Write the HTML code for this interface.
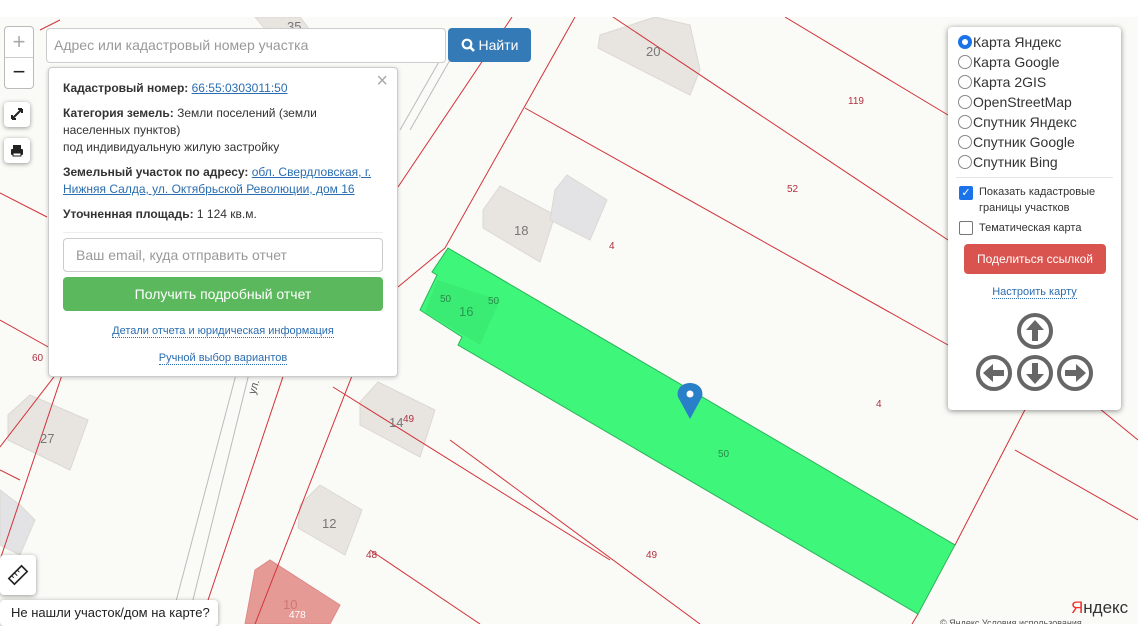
<!DOCTYPE html>
<html><head><meta charset="utf-8"><style>
*{box-sizing:border-box}
body{margin:0;width:1138px;height:624px;overflow:hidden;background:#fff;font-family:"Liberation Sans",Arial,sans-serif;position:relative}
#map{position:absolute;left:0;top:17px;width:1138px;height:607px;background:#fafaf6}
.box{position:absolute;background:#fff;border-radius:4px;box-shadow:0 1px 5px rgba(0,0,0,.4)}
a{color:#2a6db0}
.pop{position:absolute;left:48px;top:67px;width:350px;height:310px;background:#fff;border:1px solid #ccc;border-radius:4px;box-shadow:0 1px 4px rgba(0,0,0,.2);font-size:12px;color:#333;padding:12px 14px}
.pop p{margin:0 0 8px;line-height:17px}
.dot{color:#2a6db0;text-decoration:none;border-bottom:1px dotted #2a6db0;font-size:11px}
.rp{position:absolute;left:948px;top:27px;width:173px;height:383px;background:#fff;border-radius:4px;box-shadow:0 1px 6px rgba(0,0,0,.45);font-size:14px;color:#333;padding:5px 0 0 10px}
.r{height:20px;display:flex;align-items:center}
.r i{width:14px;height:14px;border-radius:50%;border:1.5px solid #888;margin-right:1px;display:inline-block}
</style></head><body>
<div id="map">
<svg width="1138" height="607" viewBox="0 17 1138 607" style="position:absolute;left:0;top:0">
<g fill="#e8e5e1" stroke="#dcd8d3">
<polygon points="600,35 655,17 690,25 700,70 690,95 598,48"/>
<polygon points="483,210 500,186 555,215 540,262 483,228"/>
<polygon points="555,190 567,175 607,200 590,240 550,220" fill="#e3e3e5"/>
<polygon points="360,402 378,382 435,410 420,457 360,425"/>
<polygon points="8,415 30,395 88,420 70,470 8,440"/>
<polygon points="300,505 320,485 362,510 345,555 298,528"/>
<polygon points="0,490 20,505 35,520 20,555 0,545" fill="#e3e3e5"/>
<polygon points="255,570 270,560 340,605 330,624 245,624" fill="#e69a96" stroke="#d88"/>
<polygon points="255,17 300,17 310,30 270,35"/>
</g>
<polygon points="448,248 955,545 918,614 458,345 462,337 420,310 437,275 432,272" fill="#3ef77a" stroke="#2bb35a" stroke-width="1"/>
<polygon points="437,280 500,300 480,345 425,312" fill="#3be46f" opacity=".6"/>
<g stroke="#bbb" stroke-width="1" fill="none">
<line x1="263" y1="317" x2="187" y2="624"/><line x1="247" y1="333" x2="170" y2="624"/>
<line x1="400" y1="130" x2="440" y2="60"/><line x1="410" y1="130" x2="450" y2="60"/>
</g>
<g stroke="#d2323a" stroke-width="1" fill="none">
<line x1="398" y1="187" x2="512" y2="17"/>
<line x1="445" y1="248" x2="575" y2="17"/>
<line x1="398" y1="287" x2="445" y2="248"/>
<line x1="525" y1="108" x2="948" y2="345"/>
<line x1="613" y1="17" x2="948" y2="240"/>
<line x1="785" y1="17" x2="948" y2="115"/>
<line x1="303" y1="317" x2="200" y2="624"/>
<line x1="375" y1="317" x2="255" y2="624"/>
<line x1="333" y1="387" x2="610" y2="560"/>
<line x1="450" y1="440" x2="700" y2="624"/>
<line x1="370" y1="550" x2="480" y2="624"/>
<line x1="100" y1="317" x2="0" y2="447"/>
<line x1="0" y1="193" x2="47" y2="217"/>
<line x1="0" y1="320" x2="68" y2="358"/>
<line x1="68" y1="357" x2="0" y2="560"/>
<line x1="0" y1="470" x2="20" y2="480"/>
<line x1="60" y1="20" x2="40" y2="30"/>
<line x1="955" y1="545" x2="1030" y2="400"/>
<line x1="1030" y1="400" x2="1060" y2="300"/>
<line x1="1015" y1="450" x2="1138" y2="520"/>
<line x1="1040" y1="360" x2="1138" y2="440"/>
<line x1="918" y1="614" x2="912" y2="624"/>
</g>
<g font-size="10" fill="#b03040" font-family="Liberation Sans">
<text x="848" y="104">119</text><text x="787" y="192">52</text><text x="609" y="249">4</text><text x="876" y="407">4</text>
<text x="32" y="361">60</text><text x="403" y="422">49</text><text x="366" y="558">48</text><text x="646" y="558">49</text>
<text x="718" y="457" fill="#2a8a4a">50</text><text x="440" y="302" fill="#2a8a4a">50</text><text x="488" y="304" fill="#2a8a4a">50</text>
<text x="289" y="618" fill="#fff">478</text>
</g>
<g font-size="13" fill="#777" font-family="Liberation Sans">
<text x="646" y="56">20</text><text x="514" y="235">18</text><text x="389" y="427">14</text><text x="40" y="443">27</text><text x="322" y="528">12</text><text x="459" y="316" fill="#2a9a50">16</text><text x="283" y="609" fill="#c77">10</text><text x="287" y="31">35</text>
</g>
<text x="0" y="0" font-size="11" fill="#555" transform="translate(255,395) rotate(-72)">ул.</text>
<path d="M690 383c-9 0-14 7-12 14l12 22 12-22c2-7-3-14-12-14z" fill="#2a7fc9"/>
<circle cx="690" cy="394" r="3.5" fill="#fff"/>
<text x="1071" y="613" font-size="17" fill="#e33" font-family="Liberation Sans">Я<tspan fill="#333">ндекс</tspan></text>
<text x="940" y="626" font-size="9" fill="#555">© Яндекс Условия использования</text>
</svg>
</div>

<div class="box" style="left:4px;top:26px;width:30px;height:63px;border:1px solid #bbb;box-shadow:none">
<div style="height:31px;border-bottom:1px solid #ccc;text-align:center;font-size:22px;color:#aaa;line-height:30px">+</div>
<div style="text-align:center;font-size:22px;color:#222;line-height:28px">−</div></div>
<div class="box" style="left:4px;top:102px;width:26px;height:25px">
<svg width="26" height="25"><path d="M8 17l10-10M8 17v-4M8 17h4M18 7h-4M18 7v4" stroke="#222" stroke-width="2" fill="none"/></svg></div>
<div class="box" style="left:4px;top:138px;width:26px;height:25px">
<svg width="26" height="25"><rect x="9" y="7" width="8" height="4" fill="#222"/><rect x="7" y="11" width="12" height="6" rx="1" fill="#222"/><rect x="9" y="15" width="8" height="3" fill="#fff" stroke="#222"/></svg></div>
<div style="position:absolute;left:46px;top:28px;width:400px;height:35px;border:1px solid #ccc;border-radius:4px;background:#fff;font-size:14px;color:#999;padding:8px 7px">Адрес или кадастровый номер участка</div>
<div style="position:absolute;left:448px;top:28px;width:83px;height:34px;background:#337ab7;border-radius:4px;color:#fff;font-size:14px;line-height:34px;text-align:center"><svg width="14" height="14" style="vertical-align:-2px"><circle cx="6" cy="6" r="4.3" stroke="#fff" stroke-width="2.2" fill="none"/><path d="M9 9l4 4" stroke="#fff" stroke-width="2.6"/></svg> Найти</div>

<div class="pop">
<span style="position:absolute;right:9px;top:2px;font-size:20px;color:#aaa">×</span>
<p><b>Кадастровый номер:</b> <a href="#">66:55:0303011:50</a></p>
<p><b>Категория земель:</b> Земли поселений (земли населенных пунктов)<br>под индивидуальную жилую застройку</p>
<p><b>Земельный участок по адресу:</b> <a href="#">обл. Свердловская, г. Нижняя Салда, ул. Октябрьской Революции, дом 16</a></p>
<p style="margin-bottom:9px"><b>Уточненная площадь:</b> 1 124 кв.м.</p>
<div style="border-top:1px solid #eee;margin:0 0 5px"></div>
<div style="height:34px;border:1px solid #ccc;border-radius:4px;font-size:14px;color:#999;padding:8px 12px">Ваш email, куда отправить отчет</div>
<div style="margin-top:5px;height:34px;background:#5cb85c;border-radius:4px;color:#fff;font-size:14px;text-align:center;line-height:34px">Получить подробный отчет</div>
<div style="text-align:center;margin-top:12px"><a class="dot" href="#">Детали отчета и юридическая информация</a></div>
<div style="text-align:center;margin-top:13px"><a class="dot" href="#">Ручной выбор вариантов</a></div>
</div>

<div class="rp">
<div class="r"><i style="border:4px solid #1a73e8"></i>Карта Яндекс</div>
<div class="r"><i></i>Карта Google</div>
<div class="r"><i></i>Карта 2GIS</div>
<div class="r"><i></i>OpenStreetMap</div>
<div class="r"><i></i>Спутник Яндекс</div>
<div class="r"><i></i>Спутник Google</div>
<div class="r"><i></i>Спутник Bing</div>
<div style="border-top:1px solid #e5e5e5;margin:5px 8px 6px -2px"></div>
<div style="display:flex;font-size:11px;line-height:16px"><span style="width:14px;height:14px;background:#1a73e8;border-radius:2px;color:#fff;font-size:11px;line-height:14px;text-align:center;margin:2px 6px 0 1px;flex:none">✓</span>Показать кадастровые границы участков</div>
<div style="display:flex;font-size:11px;line-height:16px;margin-top:4px"><span style="width:14px;height:14px;border:1.5px solid #777;border-radius:2px;margin:1px 6px 0 1px;flex:none"></span>Тематическая карта</div>
<div style="margin:8px 0 0 6px;width:142px;height:30px;background:#d9534f;border-radius:4px;color:#fff;font-size:12px;text-align:center;line-height:30px">Поделиться ссылкой</div>
<div style="text-align:center;margin:8px 10px 0 0"><a class="dot" href="#">Настроить карту</a></div>
<svg width="173" height="110" style="position:absolute;left:0;top:283px" viewBox="948 310 173 110">
<g stroke="#666" stroke-width="4" fill="#fff"><circle cx="1035" cy="331" r="16"/><circle cx="994" cy="373" r="16"/><circle cx="1035" cy="373" r="16"/><circle cx="1075" cy="373" r="16"/></g>
<g fill="#666">
<path d="M1035 320l-9 10h6v11h6v-11h6z"/>
<path d="M1035 384l-9-10h6v-11h6v11h6z"/>
<path d="M983 373l10-9v6h11v6h-11v6z"/>
<path d="M1086 373l-10-9v6h-11v6h11v6z"/>
</g></svg>
</div>

<div class="box" style="left:0;top:555px;width:36px;height:40px"><svg width="36" height="40"><g transform="rotate(-45 18 20)"><rect x="9" y="16" width="18" height="8" fill="none" stroke="#222" stroke-width="1.6"/><path d="M13 16v3M17 16v4M21 16v3" stroke="#222"/></g></svg></div>
<div class="box" style="left:0;top:600px;width:218px;height:26px;font-size:13px;color:#222;padding:5px 0 0 11px">Не нашли участок/дом на карте?</div>
</body></html>
